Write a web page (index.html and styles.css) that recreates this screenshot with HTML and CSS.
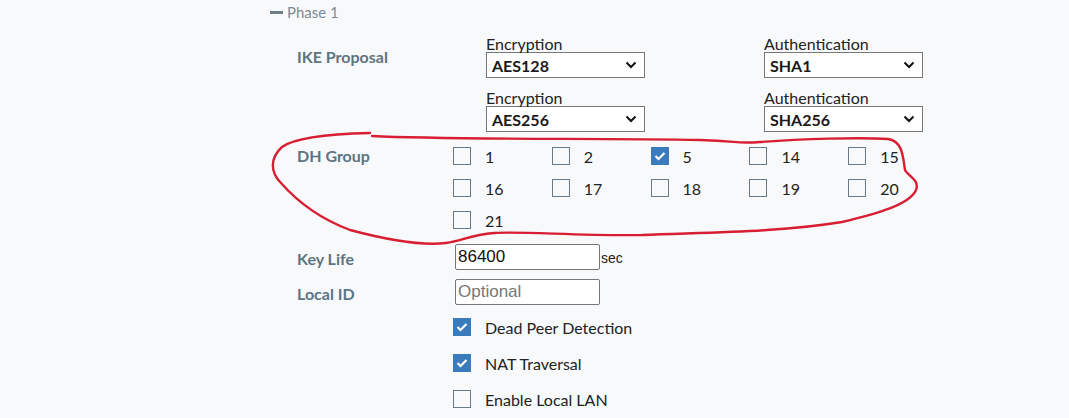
FILE: index.html
```html
<!DOCTYPE html>
<html>
<head>
<meta charset="utf-8">
<link rel="stylesheet" href="styles.css">
</head>
<body>
<div class="page">
  <div class="section-title"><span class="minus"></span><span>Phase 1</span></div>
  <div class="form">
    <div class="row row-ike">
      <div class="label">IKE Proposal</div>
      <div class="proposals">
        <div class="field">
          <div class="field-label">Encryption</div>
          <div class="select"><span>AES128</span><svg class="chev" width="12" height="8" viewBox="0 0 12 8"><path d="M1.5 1.5 L6 6 L10.5 1.5" fill="none" stroke="#111" stroke-width="2"/></svg></div>
        </div>
        <div class="field">
          <div class="field-label">Authentication</div>
          <div class="select"><span>SHA1</span><svg class="chev" width="12" height="8" viewBox="0 0 12 8"><path d="M1.5 1.5 L6 6 L10.5 1.5" fill="none" stroke="#111" stroke-width="2"/></svg></div>
        </div>
        <div class="field">
          <div class="field-label">Encryption</div>
          <div class="select"><span>AES256</span><svg class="chev" width="12" height="8" viewBox="0 0 12 8"><path d="M1.5 1.5 L6 6 L10.5 1.5" fill="none" stroke="#111" stroke-width="2"/></svg></div>
        </div>
        <div class="field">
          <div class="field-label">Authentication</div>
          <div class="select"><span>SHA256</span><svg class="chev" width="12" height="8" viewBox="0 0 12 8"><path d="M1.5 1.5 L6 6 L10.5 1.5" fill="none" stroke="#111" stroke-width="2"/></svg></div>
        </div>
      </div>
    </div>

    <div class="row row-dh">
      <div class="label label-dh">DH Group</div>
      <div class="dh-grid">
        <div class="opt"><span class="box"></span><span>1</span></div>
        <div class="opt"><span class="box"></span><span>2</span></div>
        <div class="opt"><span class="box checked"><svg width="12" height="10" viewBox="0 0 12 10"><path d="M1.5 5 L4.5 8 L10.5 2" fill="none" stroke="#fff" stroke-width="2.2"/></svg></span><span>5</span></div>
        <div class="opt"><span class="box"></span><span>14</span></div>
        <div class="opt"><span class="box"></span><span>15</span></div>
        <div class="opt"><span class="box"></span><span>16</span></div>
        <div class="opt"><span class="box"></span><span>17</span></div>
        <div class="opt"><span class="box"></span><span>18</span></div>
        <div class="opt"><span class="box"></span><span>19</span></div>
        <div class="opt"><span class="box"></span><span>20</span></div>
        <div class="opt"><span class="box"></span><span>21</span></div>
      </div>
    </div>

    <div class="row row-input row-keylife">
      <div class="label">Key Life</div>
      <div class="ctrl"><input class="text" type="text" value="86400"><span class="unit">sec</span></div>
    </div>
    <div class="row row-input row-localid">
      <div class="label">Local ID</div>
      <div class="ctrl"><input class="text" type="text" placeholder="Optional"></div>
    </div>

    <div class="row row-check row-first">
      <div class="label"></div>
      <div class="opt"><span class="box checked"><svg width="12" height="10" viewBox="0 0 12 10"><path d="M1.5 5 L4.5 8 L10.5 2" fill="none" stroke="#fff" stroke-width="2.2"/></svg></span><span>Dead Peer Detection</span></div>
    </div>
    <div class="row row-check">
      <div class="label"></div>
      <div class="opt"><span class="box checked"><svg width="12" height="10" viewBox="0 0 12 10"><path d="M1.5 5 L4.5 8 L10.5 2" fill="none" stroke="#fff" stroke-width="2.2"/></svg></span><span>NAT Traversal</span></div>
    </div>
    <div class="row row-check">
      <div class="label"></div>
      <div class="opt"><span class="box"></span><span>Enable Local LAN</span></div>
    </div>
  </div>
</div>
<svg class="annotation" width="1069" height="418" viewBox="0 0 1069 418">
  <path d="M372 136 C450 140 600 138 700 140 C740 141 735 144 760 142 C800 139 860 137 888 139 C903 141 903 158 905 170 C908 176 920 180 916 190 C910 204 880 213 842 222 C780 232 720 232 642 235 C580 236 520 231 494 233 C470 235 462 241 446 243 C420 246 380 238 350 230 C318 218 296 200 281 183 C270 172 270 158 282 147 C294 138 330 134 370 133" fill="none" stroke="#d81e32" stroke-width="2.4" stroke-linecap="round" stroke-linejoin="round"/>
</svg>
</body>
</html>
```
FILE: styles.css
```css
html, body {
  margin: 0;
  padding: 0;
}
body {
  background: #f8f9fb;
  font-family: Lato, "Open Sans", sans-serif;
  width: 1069px;
  height: 418px;
  overflow: hidden;
  position: relative;
}
.page {
  padding-left: 270px;
}
.section-title {
  display: flex;
  align-items: center;
  height: 24px;
  color: #7b8b95;
  font-size: 15px;
}
.minus {
  width: 13px;
  height: 3px;
  background: #6e7f89;
  margin-right: 4px;
  margin-top: 1px;
}
.form {
  margin-left: 27px;
  margin-top: 12px;
}
.row {
  display: grid;
  grid-template-columns: 156px auto;
}
.label {
  color: #5d7481;
  font-weight: 700;
  font-size: 16px;
  line-height: 16px;
}
.row-ike .label {
  padding-top: 13px;
}
.proposals {
  padding-left: 33px;
  display: grid;
  grid-template-columns: 159px 159px;
  column-gap: 119px;
  row-gap: 12px;
}
.field-label {
  font-size: 16px;
  line-height: 16px;
  color: #222;
}
.select {
  box-sizing: border-box;
  height: 26px;
  border: 1px solid #777;
  background: #fff;
  display: flex;
  align-items: center;
  justify-content: space-between;
  padding: 0 7px 0 5px;
  font-size: 16px;
  font-weight: 700;
  color: #1a1a1a;
}
.row-dh {
  margin-top: 8px;
}
.label-dh {
  line-height: 32px;
}
.dh-grid {
  display: grid;
  grid-template-columns: repeat(5, 98.8px);
  grid-auto-rows: 32px;
}
.opt {
  display: flex;
  align-items: center;
  gap: 14px;
  font-size: 16px;
  color: #222;
}
.box {
  box-sizing: border-box;
  width: 18px;
  height: 18px;
  border: 1px solid #687b87;
  background: #f8f9fb;
  display: flex;
  align-items: center;
  justify-content: center;
  flex: none;
}
.box.checked {
  background: #3a7bbd;
  border-color: #3a7bbd;
}
.row-input {
  align-items: center;
}
.row-input .label {
  padding-top: 3px;
}
.row-keylife {
  margin-top: 8px;
}
.row-localid {
  margin-top: 9px;
}
.ctrl {
  display: flex;
  align-items: center;
  padding-left: 2px;
}
.text {
  box-sizing: border-box;
  width: 145px;
  height: 26px;
  border: 1px solid #767676;
  border-radius: 2px;
  background: #fff;
  font-family: "Liberation Sans", Arial, sans-serif;
  font-size: 17px;
  color: #111;
  padding: 0 2px;
  margin: 0;
  outline: none;
}
.text::placeholder {
  color: #777;
}
.unit {
  font-family: "Liberation Sans", Arial, sans-serif;
  font-size: 14px;
  color: #222;
  margin-left: 1px;
  padding-top: 2px;
}
.row-check {
  height: 36px;
  align-items: center;
}
.row-first {
  margin-top: 4px;
}
.annotation {
  position: absolute;
  left: 0;
  top: 0;
  pointer-events: none;
}
```
